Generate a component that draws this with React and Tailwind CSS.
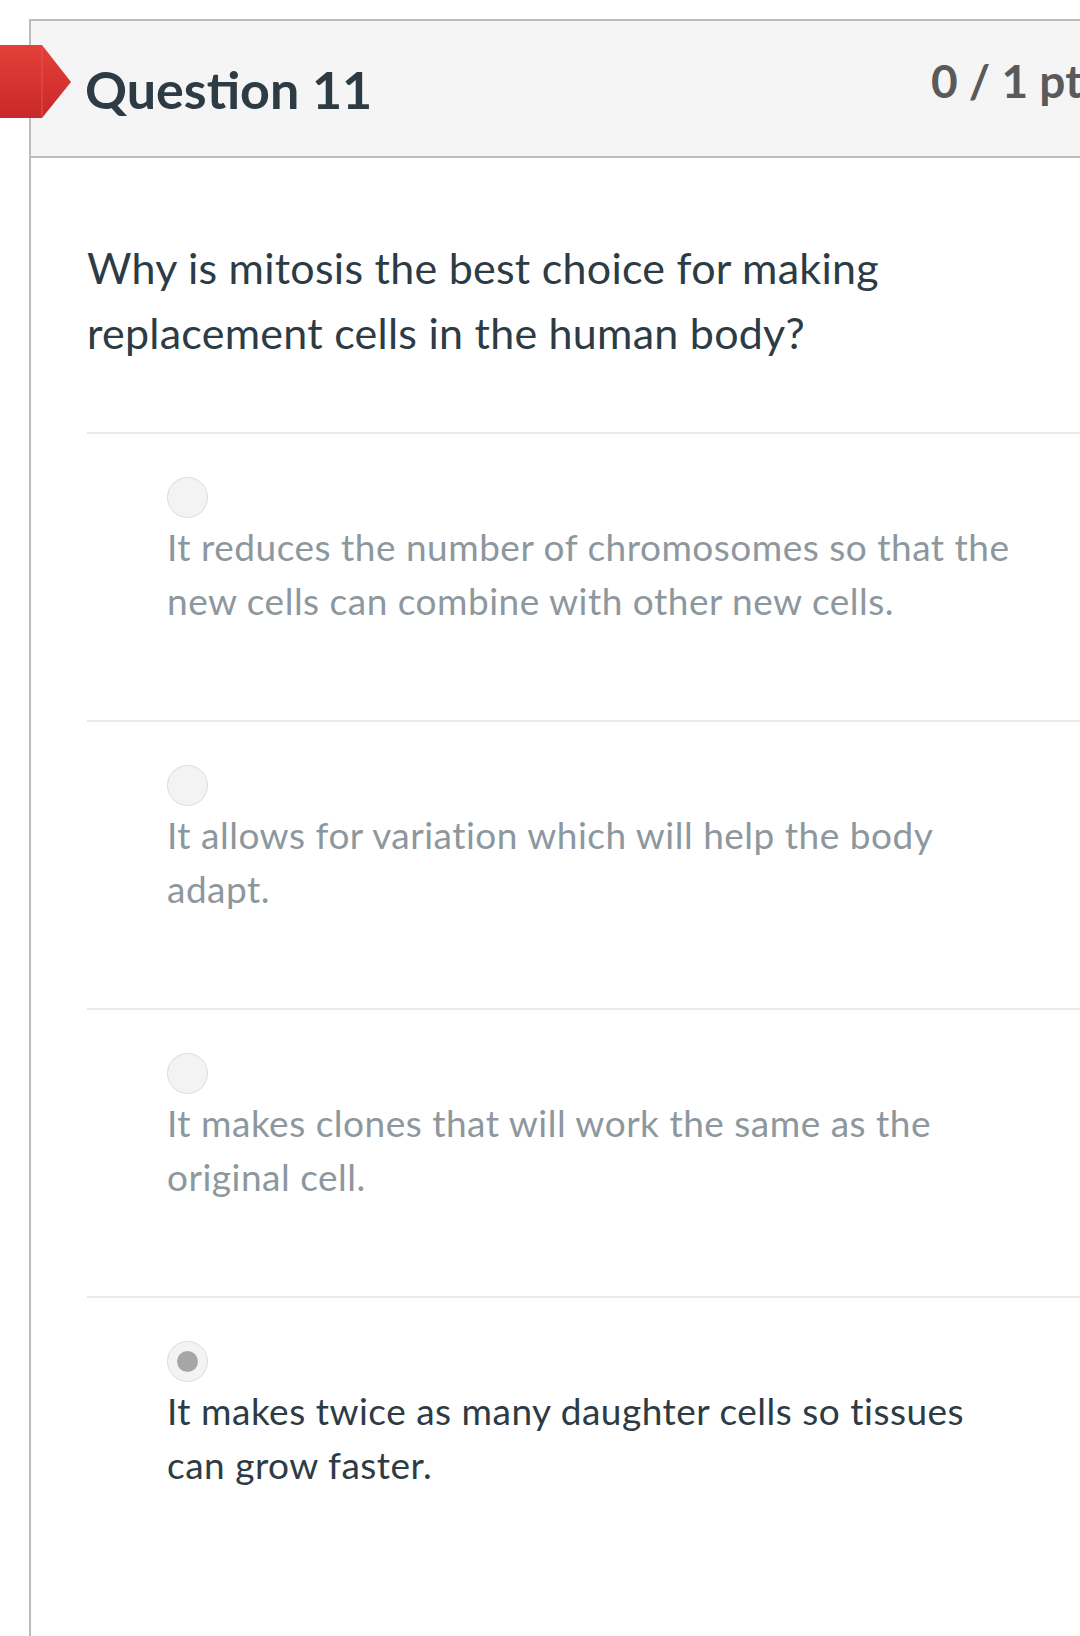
import React from "react";

function Radio({ checked }) {
  return (
    <div className="w-[41px] h-[41px] rounded-full bg-[#f3f3f3] border border-[#dcdcdc] flex items-center justify-center">
      {checked && <div className="w-[21px] h-[21px] rounded-full bg-[#a6a6a6]" />}
    </div>
  );
}

function Answer({ lines, checked }) {
  return (
    <div className="border-t-2 border-[#ebebeb] pl-[80px] pt-[43px] pb-[92px]">
      <Radio checked={checked} />
      <div
        className={`mt-[2px] text-[37px] leading-[54px] tracking-[0.5px] whitespace-nowrap ${
          checked ? "text-[#2d3b45]" : "text-[#8d979e]"
        }`}
      >
        {lines[0]}
        <br />
        {lines[1]}
      </div>
    </div>
  );
}

export default function App() {
  return (
    <div
      className="relative w-[1080px] h-[1636px] overflow-hidden bg-white"
      style={{ fontFamily: "Lato, 'Open Sans', sans-serif" }}
    >
      <div className="pt-[19px] pl-[29px]">
        <div className="w-[1200px] min-h-[1617px] border-l-2 border-t-2 border-[#bcbcbc]">
          <div className="flex items-start bg-[#f5f5f5] border-b-2 border-[#bcbcbc] pl-[54px] h-[137px]">
            <div className="w-[846px] pt-[37px] text-[52px] leading-[1.2] font-bold text-[#2d3b45] whitespace-nowrap">
              Question 11
            </div>
            <div className="pt-[32px] text-[46px] leading-[1.2] font-bold text-[#5a5a5a] whitespace-nowrap">
              0 / 1 pts
            </div>
          </div>
          <div className="pl-[56px] pt-[77px]">
            <div className="text-[43px] leading-[65px] tracking-[0.25px] text-[#2d3b45] whitespace-nowrap mb-[67px]">
              Why is mitosis the best choice for making
              <br />
              replacement cells in the human body?
            </div>
            <Answer
              lines={[
                "It reduces the number of chromosomes so that the",
                "new cells can combine with other new cells.",
              ]}
            />
            <Answer
              lines={[
                "It allows for variation which will help the body",
                "adapt.",
              ]}
            />
            <Answer
              lines={[
                "It makes clones that will work the same as the",
                "original cell.",
              ]}
            />
            <Answer
              checked
              lines={[
                "It makes twice as many daughter cells so tissues",
                "can grow faster.",
              ]}
            />
          </div>
        </div>
      </div>
      <svg
        className="absolute left-0 top-[45px]"
        width="72"
        height="74"
        viewBox="0 0 72 74"
      >
        <defs>
          <linearGradient id="flag" x1="0" y1="0" x2="0" y2="1">
            <stop offset="0" stopColor="#e4403a" />
            <stop offset="1" stopColor="#c9282a" />
          </linearGradient>
        </defs>
        <polygon points="0,0 42,0 71,37 42,73 0,73" fill="url(#flag)" />
        <line x1="42" y1="1" x2="42" y2="72" stroke="#ee6a62" strokeWidth="1" opacity="0.6" />
      </svg>
    </div>
  );
}
